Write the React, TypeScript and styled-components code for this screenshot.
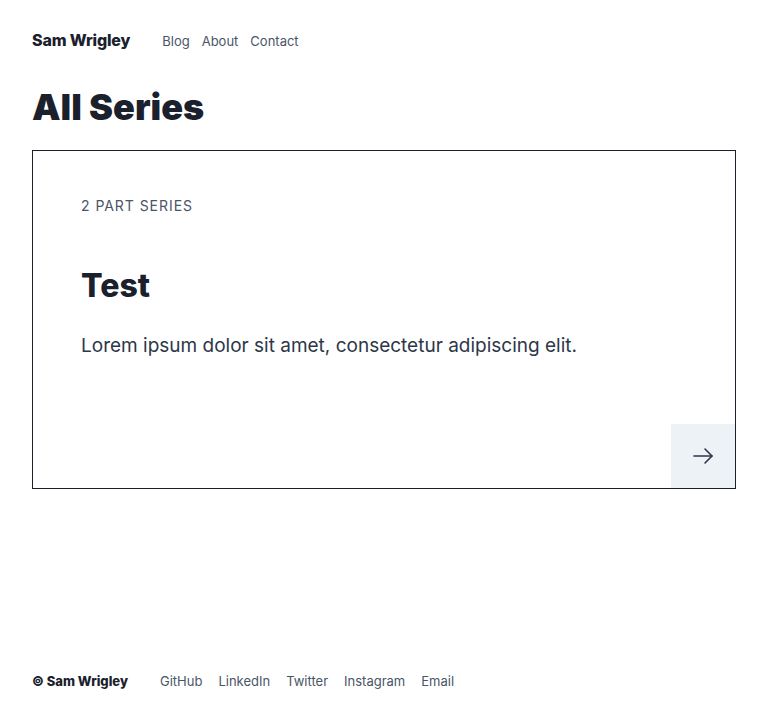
import { createGlobalStyle } from 'styled-components';
import styled from 'styled-components';

const GlobalStyle = createGlobalStyle`
  * { box-sizing: border-box; }
  body {
    margin: 0;
    font-family: Inter, "Liberation Sans", sans-serif;
    color: #1a202c;
    background: #fff;
  }
`;

const Page = styled.div`
  min-height: 720px;
  display: flex;
  flex-direction: column;
  padding: 0 32px;
`;

const Header = styled.header`
  display: flex;
  align-items: center;
  gap: 32px;
  height: 80px;
`;

const Brand = styled.a`
  font-size: 16px;
  font-weight: 800;
  letter-spacing: -0.01em;
  color: #1a202c;
  text-decoration: none;
`;

const NavList = styled.nav<{ $gap: number; $nudge?: number }>`
  display: flex;
  gap: ${(p) => p.$gap}px;
  padding-top: ${(p) => p.$nudge ?? 0}px;
`;

const NavLink = styled.a`
  font-size: 13px;
  color: #4a5568;
  text-decoration: none;
`;

const Main = styled.main`
  flex: 1;
`;

const Title = styled.h1`
  margin: 5px 0 21px;
  font-size: 36px;
  font-weight: 900;
  line-height: 44px;
  color: #1a202c;
`;

const Card = styled.article`
  position: relative;
  border: 1px solid #1a202c;
  height: 339px;
  padding: 48px 48px;
`;

const Eyebrow = styled.p`
  margin: 0;
  font-size: 14px;
  letter-spacing: 0.95px;
  line-height: 14px;
  color: #4a5568;
  text-transform: uppercase;
`;

const CardTitle = styled.h2`
  margin: 54px 0 0;
  font-size: 32px;
  font-weight: 800;
  line-height: 38px;
  color: #1a202c;
`;

const Excerpt = styled.p`
  margin: 27px 0 0;
  font-size: 19px;
  line-height: 28px;
  color: #2d3748;
`;

const ArrowButton = styled.a`
  position: absolute;
  right: 0;
  bottom: 0;
  width: 64px;
  height: 64px;
  display: flex;
  align-items: center;
  justify-content: center;
  background: #edf2f7;
  color: #2d3748;
`;

const Footer = styled.footer`
  display: flex;
  align-items: center;
  gap: 32px;
  height: 82px;
  padding-top: 4px;
`;

const Copyright = styled.span`
  font-size: 13px;
  font-weight: 800;
  color: #1a202c;
`;

const App = () => {
  return (
    <>
      <GlobalStyle />
      <Page>
        <Header>
          <Brand href="#">Sam Wrigley</Brand>
          <NavList $gap={12} $nudge={2}>
            <NavLink href="#">Blog</NavLink>
            <NavLink href="#">About</NavLink>
            <NavLink href="#">Contact</NavLink>
          </NavList>
        </Header>
        <Main>
          <Title>All Series</Title>
          <Card>
            <Eyebrow>2 Part Series</Eyebrow>
            <CardTitle>Test</CardTitle>
            <Excerpt>Lorem ipsum dolor sit amet, consectetur adipiscing elit.</Excerpt>
            <ArrowButton href="#" aria-label="View series">
              <svg width="24" height="24" viewBox="0 0 24 24" fill="none" stroke="currentColor" strokeWidth="1.6" strokeLinecap="round" strokeLinejoin="round">
                <path d="M3 12h18" />
                <path d="M14 5l7 7-7 7" />
              </svg>
            </ArrowButton>
          </Card>
        </Main>
        <Footer>
          <Copyright>© Sam Wrigley</Copyright>
          <NavList $gap={16}>
            <NavLink href="#">GitHub</NavLink>
            <NavLink href="#">LinkedIn</NavLink>
            <NavLink href="#">Twitter</NavLink>
            <NavLink href="#">Instagram</NavLink>
            <NavLink href="#">Email</NavLink>
          </NavList>
        </Footer>
      </Page>
    </>
  );
};

export default App;
